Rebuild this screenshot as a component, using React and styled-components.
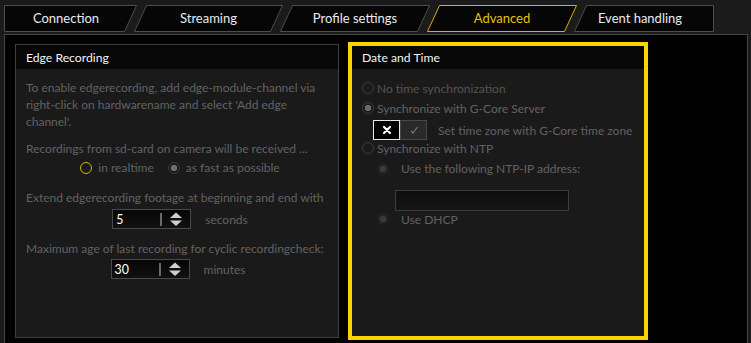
import styled, { createGlobalStyle } from 'styled-components'

const GlobalStyle = createGlobalStyle`
  html, body {
    margin: 0;
    padding: 0;
    background: #1b1b1b;
    font-family: Lato, "Noto Sans", sans-serif;
    overflow: hidden;
  }
`;

const Page = styled.div`
  width: 751px;
  height: 343px;
  padding: 5px 3px 0 4px;
  box-sizing: border-box;
  display: flex;
  flex-direction: column;
`;

const TabBar = styled.div`
  display: flex;
  height: 27px;
`;

const TabItem = styled.div`
  position: relative;
  width: ${p => p.$w}px;
  height: 27px;
  margin-left: ${p => (p.$first ? 0 : -3)}px;
  display: flex;
  align-items: center;
  justify-content: center;
  padding: 0 ${p => p.$padR || 0}px 0 ${p => p.$padL || 0}px;
  box-sizing: border-box;
  font-size: 13px;
  color: ${p => (p.$active ? '#e8c200' : '#e6ecf2')};
`;

const TabShape = styled.svg`
  position: absolute;
  inset: 0;
  z-index: 0;
`;

const TabLabel = styled.span`
  position: relative;
  z-index: 1;
  margin-top: -1px;
`;

const Frame = styled.div`
  flex: 1;
  margin-top: 2px;
  border: 1px solid #444;
  border-bottom: none;
  background: #020202;
  display: flex;
  align-items: flex-start;
  padding: 7px 0 0 10px;
  gap: 9px;
`;

const Panel = styled.div`
  width: ${p => p.$w}px;
  height: ${p => p.$h}px;
  margin-top: ${p => p.$top}px;
  box-sizing: border-box;
  border: ${p => (p.$highlight ? '4px solid #fcd500' : '1px solid #3e3e3e')};
  background: #1a1a1a;
  display: flex;
  flex-direction: column;
`;

const PanelHeader = styled.div`
  height: ${p => p.$h}px;
  background: #070707;
  color: #f4f6f8;
  font-size: 12.2px;
  display: flex;
  align-items: center;
  padding-left: ${p => p.$pad}px;
  flex-shrink: 0;
`;

const PanelBody = styled.div`
  padding: ${p => p.$pad};
  display: flex;
  flex-direction: column;
  font-size: 12px;
  color: #626262;
  white-space: nowrap;
`;

const Para = styled.p`
  margin: 0 0 ${p => p.$gap || 0}px;
  line-height: 17px;
`;

const CenterRow = styled.div`
  display: flex;
  justify-content: center;
  align-items: center;
  gap: ${p => p.$gap || 6}px;
  margin: ${p => p.$m || '0'};
  line-height: 17px;
`;

const RadioLabel = styled.label`
  display: flex;
  align-items: center;
  gap: ${p => p.$gap || 6}px;
  margin-left: ${p => p.$indent || 0}px;
  color: ${p => p.$color || '#626262'};
  height: ${p => p.$h || 20}px;
`;

const RadioDot = styled.span`
  width: 12px;
  height: 12px;
  box-sizing: border-box;
  border-radius: 50%;
  flex-shrink: 0;
  border: 1px solid ${p => p.$ring};
  background: ${p => (p.$dot ? `radial-gradient(circle, ${p.$dot} 0 3px, transparent 3.5px)` : 'transparent')};
`;

const SubDot = styled.span`
  width: 12px;
  height: 12px;
  border-radius: 50%;
  flex-shrink: 0;
  background: radial-gradient(circle, #3a3a3a 0 3px, #222 3.5px 6px, transparent 6px);
`;

const Spinner = styled.div`
  width: 79px;
  height: 20px;
  box-sizing: border-box;
  border: 1px solid #4a4a4a;
  background: linear-gradient(#060606, #111);
  display: flex;
  align-items: center;
`;

const SpinValue = styled.span`
  flex: 1;
  color: #fff;
  font-size: 12.4px;
  padding-left: 3px;
`;

const SpinDivider = styled.span`
  width: 2px;
  height: 13px;
  background: #6a6a6a;
`;

const SpinArrows = styled.svg`
  width: 28px;
  height: 18px;
`;

const UnitLabel = styled.span`
  margin-left: 4px;
`;

const ToggleRow = styled.div`
  display: flex;
  align-items: center;
  margin: 2px 0 -2px 11px;
  gap: 11px;
`;

const Toggle = styled.div`
  display: flex;
  height: 20px;
`;

const ToggleCell = styled.div`
  width: 27px;
  height: 20px;
  box-sizing: border-box;
  display: flex;
  align-items: center;
  justify-content: center;
  border: 1px solid ${p => (p.$on ? '#e8e8e8' : '#474747')};
  background: ${p => (p.$on ? '#000' : '#2a2a2a')};
`;

const IpInput = styled.div`
  width: 174px;
  height: 21px;
  box-sizing: border-box;
  margin: 11px 0 0 33px;
  border: 1px solid #3c3c3c;
  background: linear-gradient(#0e0e0e, #151515);
`;

const tabs = [
  { label: 'Connection', w: 133, pts: '0.5,0.5 132.5,0.5 120.5,26.5 0.5,26.5', padR: 9 },
  { label: 'Streaming', w: 149, pts: '12.5,0.5 148.5,0.5 136.5,26.5 0.5,26.5' },
  { label: 'Profile settings', w: 150, pts: '12.5,0.5 149.5,0.5 137.5,26.5 0.5,26.5' },
  { label: 'Advanced', w: 150, pts: '12.5,0.5 149.5,0.5 137.5,26.5 0.5,26.5', active: true },
  { label: 'Event handling', w: 140, pts: '12.5,0.5 139.5,0.5 139.5,26.5 0.5,26.5', padR: 8 },
];

function Tabs() {
  return (
    <TabBar>
      {tabs.map((t, i) => (
        <TabItem key={t.label} $w={t.w} $first={i === 0} $active={t.active} $padL={t.padL} $padR={t.padR}>
          <TabShape width={t.w} height="27" viewBox={`0 0 ${t.w} 27`}>
            <polygon points={t.pts} fill="#060606" stroke={t.active ? '#d9b200' : '#4d4d4d'} strokeWidth="1" />
          </TabShape>
          <TabLabel>{t.label}</TabLabel>
        </TabItem>
      ))}
    </TabBar>
  )
}

function NumberSpin({ value }) {
  return (
    <Spinner>
      <SpinValue>{value}</SpinValue>
      <SpinDivider />
      <SpinArrows viewBox="0 0 28 18">
        <polygon points="8,8 14,2.5 20,8" fill="#cfcfcf" />
        <polygon points="8,10.5 20,10.5 14,16" fill="#cfcfcf" />
      </SpinArrows>
    </Spinner>
  )
}

function EdgeRecording() {
  return (
    <Panel $w={324} $h={294} $top={2}>
      <PanelHeader $h={24} $pad={10}>Edge Recording</PanelHeader>
      <PanelBody $pad="10px 4px 0 10px">
        <Para $gap={10}>
          To enable edgerecording, add edge-module-channel via<br />
          right-click on hardwarename and select 'Add edge<br />
          channel'.
        </Para>
        <Para>Recordings from sd-card on camera will be received ...</Para>
        <CenterRow $gap={14} $m="1px 0 0 0">
          <RadioLabel $h={19}>
            <RadioDot $ring="#d7b400" />
            in realtime
          </RadioLabel>
          <RadioLabel $h={19}>
            <RadioDot $ring="#3a3a3a" $dot="#6e6e6e" />
            as fast as possible
          </RadioLabel>
        </CenterRow>
        <Para style={{ marginTop: 12 }}>Extend edgerecording footage at beginning and end with</Para>
        <CenterRow $gap={10} $m="3px 0 0 0">
          <NumberSpin value="5" />
          <UnitLabel>seconds</UnitLabel>
        </CenterRow>
        <Para style={{ marginTop: 11 }}>Maximum age of last recording for cyclic recordingcheck:</Para>
        <CenterRow $gap={10} $m="2px 0 0 -4px">
          <NumberSpin value="30" />
          <UnitLabel>minutes</UnitLabel>
        </CenterRow>
      </PanelBody>
    </Panel>
  )
}

function DateAndTime() {
  return (
    <Panel $w={300} $h={298} $top={0} $highlight>
      <PanelHeader $h={23} $pad={10}>Date and Time</PanelHeader>
      <PanelBody $pad="9px 0 0 10px">
        <RadioLabel $gap={3} $color="#545454">
          <RadioDot $ring="#3c3c3c" />
          No time synchronization
        </RadioLabel>
        <RadioLabel $gap={3}>
          <RadioDot $ring="#3c3c3c" $dot="#6a6a6a" />
          Synchronize with G-Core Server
        </RadioLabel>
        <ToggleRow>
          <Toggle>
            <ToggleCell $on>
              <svg width="10" height="10" viewBox="0 0 10 10">
                <path d="M2 2 L8 8 M8 2 L2 8" stroke="#fff" strokeWidth="2.2" strokeLinecap="round" />
              </svg>
            </ToggleCell>
            <ToggleCell>
              <svg width="10" height="10" viewBox="0 0 10 10">
                <path d="M2 6 L4 8 L8.5 2" stroke="#777" strokeWidth="1.2" fill="none" />
              </svg>
            </ToggleCell>
          </Toggle>
          <span>Set time zone with G-Core time zone</span>
        </ToggleRow>
        <RadioLabel $gap={3}>
          <RadioDot $ring="#3c3c3c" />
          Synchronize with NTP
        </RadioLabel>
        <RadioLabel $indent={15} $gap={12} $h={21}>
          <SubDot />
          Use the following NTP-IP address:
        </RadioLabel>
        <IpInput />
        <RadioLabel $indent={15} $gap={12} $h={16}>
          <SubDot />
          Use DHCP
        </RadioLabel>
      </PanelBody>
    </Panel>
  )
}

export default function App() {
  return (
    <>
      <GlobalStyle />
      <Page>
        <Tabs />
        <Frame>
          <EdgeRecording />
          <DateAndTime />
        </Frame>
      </Page>
    </>
  )
}
